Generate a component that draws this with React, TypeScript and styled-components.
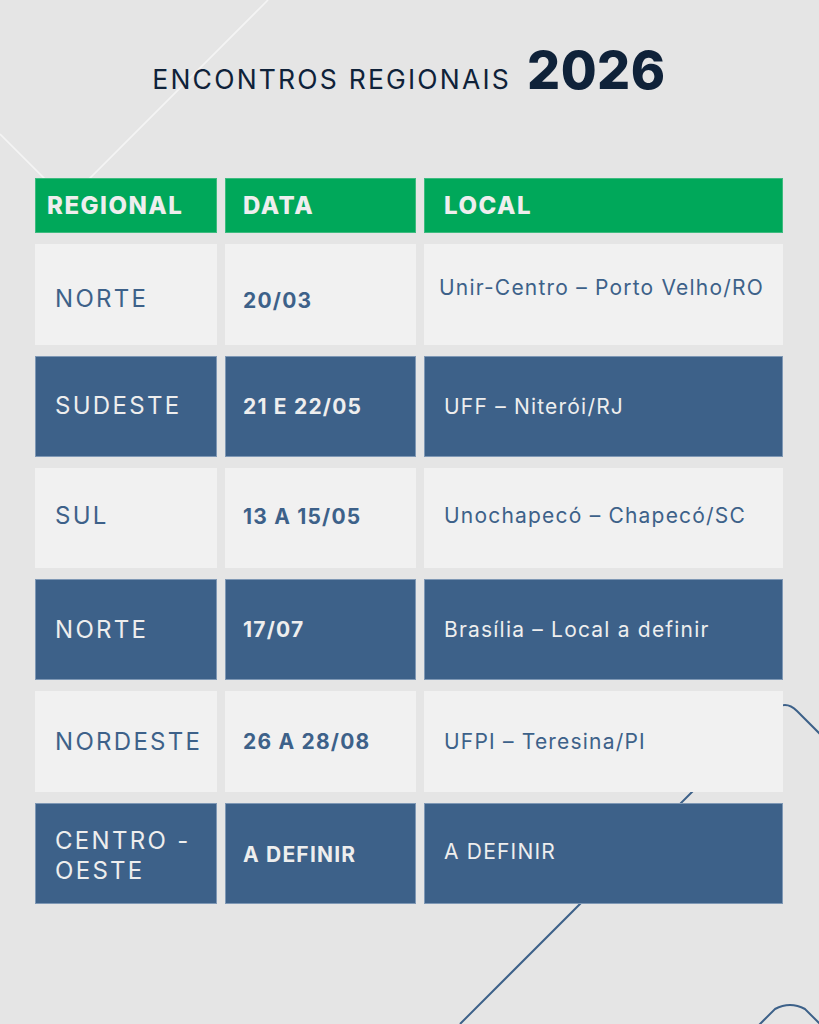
import { FC } from 'react';
import styled, { createGlobalStyle, css } from 'styled-components';

const Colours = {
  PAGE: '#e5e5e5',
  LIGHT: '#f1f1f1',
  BLUE: '#3d6189',
  GREEN: '#00a85a',
  NAVY: '#0f2239',
  PALE_TEXT: '#eeeeee',
};

const FONT = `Inter, 'Liberation Sans', sans-serif`;

const GlobalStyle = createGlobalStyle`
  html, body {
    margin: 0;
    padding: 0;
    background: ${Colours.PAGE};
  }
`;

const Page = styled.div`
  position: relative;
  width: 819px;
  height: 1024px;
  overflow: hidden;
  background: ${Colours.PAGE};
  font-family: ${FONT};
  box-sizing: border-box;
  padding: 45px 36px 0 35px;
`;

const Decor = styled.svg`
  position: absolute;
  inset: 0;
  width: 819px;
  height: 1024px;
  pointer-events: none;
`;

const Content = styled.div`
  position: relative;
  display: flex;
  flex-direction: column;
  gap: 81px;
`;

const Title = styled.h1`
  margin: 0;
  display: flex;
  justify-content: center;
  align-items: baseline;
  gap: 16px;
  height: 52px;
  line-height: 52px;
  color: ${Colours.NAVY};
  font-weight: 400;
`;

const TitleLabel = styled.span`
  font-size: 26.5px;
  letter-spacing: 2.2px;
`;

const TitleYear = styled.span`
  font-size: 52px;
  font-weight: 800;
  letter-spacing: 0.5px;
`;

const Table = styled.div`
  display: grid;
  grid-template-columns: 182px 191px 359px;
  grid-template-rows: 55px repeat(6, 100.8px);
  column-gap: 8px;
  row-gap: 11px;
`;

type Tone = 'green' | 'light' | 'blue';

const toneStyles: Record<Tone, ReturnType<typeof css>> = {
  green: css`
    background: ${Colours.GREEN};
    color: ${Colours.PALE_TEXT};
    box-shadow: inset 0 0 0 1px #3dbb7f;
  `,
  light: css`
    background: ${Colours.LIGHT};
    color: ${Colours.BLUE};
  `,
  blue: css`
    background: ${Colours.BLUE};
    color: ${Colours.PALE_TEXT};
    box-shadow: inset 0 0 0 1px #7f98b5;
  `,
};

const Cell = styled.div<{ $tone: Tone; $pad: number; $shift?: number }>`
  display: flex;
  align-items: center;
  box-sizing: border-box;
  padding-left: ${(p) => p.$pad}px;
  padding-right: 10px;
  padding-top: ${(p) => Math.max(0, (p.$shift ?? 0) * 2)}px;
  padding-bottom: ${(p) => Math.max(0, -(p.$shift ?? 0) * 2)}px;
  ${(p) => toneStyles[p.$tone]}
`;

type Variant = 'head' | 'region' | 'date' | 'place';

const variantStyles: Record<Variant, ReturnType<typeof css>> = {
  head: css`
    font-size: 24px;
    font-weight: 800;
    letter-spacing: 1.5px;
  `,
  region: css`
    font-size: 24px;
    font-weight: 400;
    letter-spacing: 2.3px;
    line-height: 30px;
  `,
  date: css`
    font-size: 21px;
    font-weight: 700;
    letter-spacing: 1.2px;
  `,
  place: css`
    font-size: 21px;
    font-weight: 400;
    letter-spacing: 1.2px;
  `,
};

const CellText = styled.span<{ $variant: Variant }>`
  ${(p) => variantStyles[p.$variant]}
`;

interface Meeting {
  region: string;
  date: string;
  place: string;
  shifts?: [number, number, number];
  placePad?: number;
}

const MEETINGS: Meeting[] = [
  { region: 'NORTE', date: '20/03', place: 'Unir-Centro – Porto Velho/RO', shifts: [5, 6, -7], placePad: 15 },
  { region: 'SUDESTE', date: '21 E 22/05', place: 'UFF – Niterói/RJ' },
  { region: 'SUL', date: '13 A 15/05', place: 'Unochapecó – Chapecó/SC', shifts: [-2, -1, -2] },
  { region: 'NORTE', date: '17/07', place: 'Brasília – Local a definir' },
  { region: 'NORDESTE', date: '26 A 28/08', place: 'UFPI – Teresina/PI' },
  { region: 'CENTRO - OESTE', date: 'A DEFINIR', place: 'A DEFINIR', shifts: [3, 1, -2] },
];

const App: FC = () => {
  return (
    <Page>
      <GlobalStyle />
      <Decor viewBox='0 0 819 1024'>
        <path d='M 0 134 L 67 201 L 268 0' fill='none' stroke='#f4f4f4' strokeWidth='1.6' />
        <path
          d='M 460 1024 L 773 711 Q 785 699 797 711 L 840 754'
          fill='none'
          stroke={Colours.BLUE}
          strokeWidth='2'
        />
        <path
          d='M 740 1044 L 775 1009 Q 790 1001 805 1009 L 840 1044'
          fill='none'
          stroke={Colours.BLUE}
          strokeWidth='2'
        />
      </Decor>
      <Content>
        <Title>
          <TitleLabel>ENCONTROS REGIONAIS</TitleLabel>
          <TitleYear>2026</TitleYear>
        </Title>
        <Table>
          <Cell $tone='green' $pad={12}>
            <CellText $variant='head'>REGIONAL</CellText>
          </Cell>
          <Cell $tone='green' $pad={18}>
            <CellText $variant='head'>DATA</CellText>
          </Cell>
          <Cell $tone='green' $pad={20}>
            <CellText $variant='head'>LOCAL</CellText>
          </Cell>
          {MEETINGS.map((m, i) => {
            const tone: Tone = i % 2 === 0 ? 'light' : 'blue';
            const [s1, s2, s3] = m.shifts ?? [0, 0, 0];
            return [
              <Cell key={`r${i}`} $tone={tone} $pad={20} $shift={s1}>
                <CellText $variant='region'>{m.region}</CellText>
              </Cell>,
              <Cell key={`d${i}`} $tone={tone} $pad={18} $shift={s2}>
                <CellText $variant='date'>{m.date}</CellText>
              </Cell>,
              <Cell key={`p${i}`} $tone={tone} $pad={m.placePad ?? 20} $shift={s3}>
                <CellText $variant='place'>{m.place}</CellText>
              </Cell>,
            ];
          })}
        </Table>
      </Content>
    </Page>
  );
};

export default App;
